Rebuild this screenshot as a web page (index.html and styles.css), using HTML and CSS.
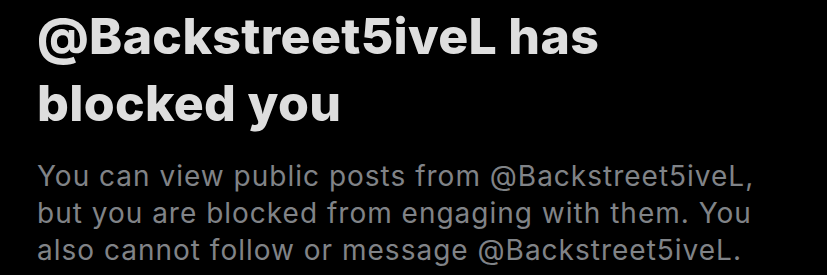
FILE: index.html
```html
<!DOCTYPE html>
<html lang="en">
<head>
    <meta charset="UTF-8">
    <meta name="viewport" content="width=device-width, initial-scale=1.0">
    <title>Blocked</title>
    <link rel="stylesheet" href="styles.css">
</head>
<body>
    <div class="blocked">
        <h1 class="blocked-title">@Backstreet5iveL has blocked you</h1>
        <p class="blocked-text">You can view public posts from @Backstreet5iveL, but you are blocked from engaging with them. You also cannot follow or message @Backstreet5iveL.</p>
    </div>
</body>
</html>
```

FILE: styles.css
```css
body {
    margin: 0;
    background-color: #000;
    font-family: Inter, "Liberation Sans", sans-serif;
}

.blocked {
    padding: 3px 37px 0 37px;
    width: 740px;
}

.blocked-title {
    margin: 0;
    max-width: 660px;
    font-size: 50px;
    font-weight: 800;
    line-height: 67px;
    color: #dedede;
    letter-spacing: 0.3px;
}

.blocked-text {
    margin: 21px 0 0 0;
    font-size: 28px;
    font-weight: 400;
    line-height: 37px;
    color: #808387;
    letter-spacing: 1px;
}
```
